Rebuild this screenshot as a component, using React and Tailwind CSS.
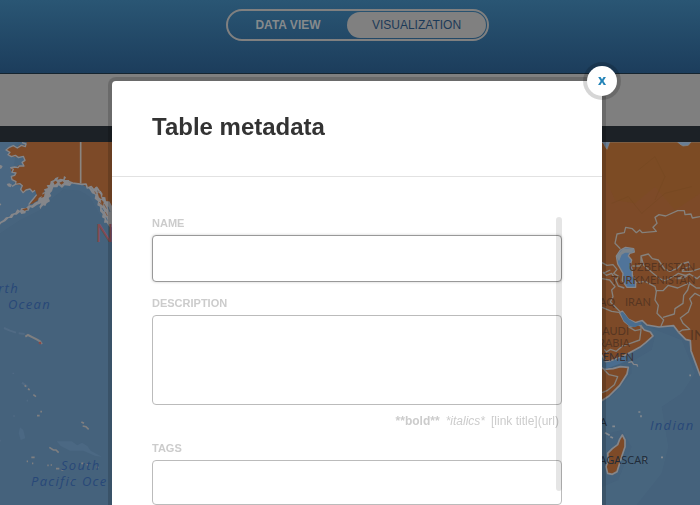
const LAND = '#7d4a28';
const COAST = '#85868a';
const SEA = 'fill-[#284878] text-[13px] italic tracking-widest';

function Alaska() {
  return (
    <g transform="translate(0 -82) scale(0.33333)" strokeLinejoin="round">
      <path d="M0 246H55L40 256L18 266L24 285L46 290L35 345L46 365L30 374L66 378L68 396L92 392L106 400L85 438L40 458L0 485Z" fill="#4d6a85" />
      <path d="M0 246L336 246L336 500L300 465L270 410L240 392L190 388L150 420L120 450L60 480L0 520Z" fill="#496680" opacity=".6" />
      <path
        d="M80 246L78 256L60 254L52 262L38 258L18 268L28 276L24 286L48 292L68 288L74 300L66 308L72 318L56 316L46 324L32 322L34 334L46 338L44 346L34 350L38 362L48 366L46 374L66 376L64 392L72 398L80 390L90 388L96 396L106 392L110 404L104 414L94 424L88 434L100 430L118 418L132 400L134 390L150 382L154 366L166 356L178 360L200 368L245 372L262 382L290 390L310 415L336 440V246Z"
        fill={LAND}
      />
      <path
        d="M66 248L78 252L76 260L64 256L52 264L40 257L28 262L18 270L30 277L24 284L34 290L46 286L56 293L70 289L75 301L66 307L72 318L58 318L54 323L44 321L32 323L40 328L36 337L48 339L44 346L34 349L36 359L48 365L46 373L36 379M46 373L60 371L67 377L62 388L69 398L78 390L90 387L98 396L105 391M110 404L102 414L92 426L86 434"
        fill="none" stroke={COAST} strokeWidth="4"
      />
      <path d="M20 372l8-2l8 4l-4 8l-8-3zM0 314l8 4l-3 7l-5 2zM0 430l4 3l-4 4z" fill={COAST} />
      <path
        d="M0 486L10 480L18 472L28 470L34 462L46 458L52 448L60 452L64 444L78 444L86 436L96 436L104 428L114 424L116 414L126 408L128 398L136 396L132 388L144 384L140 376L150 374L152 364L162 360L166 354L176 350L172 360L182 356L190 358L192 348L198 352L194 360L208 360L206 366L216 370L210 378L194 376L186 384L176 376L172 382L160 382L156 394L150 400L154 408L146 414L150 424L140 430L136 438L130 436L124 442L122 448L118 440L124 430L112 434L98 444L90 442L86 452L78 452L76 460L64 462L60 456L50 464L42 464L36 474L26 474L16 484L4 490L0 494Z"
        fill={COAST}
      />
      <path d="M160 366l8-4l4 6l-8 6zM178 368l10-4l4 4l-8 6zM66 448l14-4l4 4l-10 4zM126 404l8-4l-2 10l-8 4z" fill={LAND} />
      <path d="M242 246V370" stroke="#8a8580" strokeWidth="5" />
      <path d="M204 364L218 369L246 373L258 372L262 384L274 380L282 390L290 382L298 394" fill="none" stroke={COAST} strokeWidth="5" />
      <path
        d="M256 372L264 382L272 382L280 390L288 380L294 386L292 396L302 392L308 402L306 410L316 412L318 424L328 424L336 438L336 502L328 500L320 488L312 488L314 476L306 472L308 462L300 454L300 440L292 436L294 424L284 416L286 404L276 400L270 390Z"
        fill={COAST}
      />
      <path d="M294 398l6 4l4 14l-6-4zM304 420l6 6l-2 10l-4-6zM284 394l4 8M312 432l8 14M316 456l6 12M298 426l6 8" fill={LAND} stroke={LAND} strokeWidth="2" />
      <path d="M306 444l6 10M318 472l4 10M324 440l6 16" stroke="#4f6b86" strokeWidth="3" />
    </g>
  );
}

function Islands() {
  return (
    <g transform="translate(0 128) scale(0.33333)" fill="none" stroke="#7f7f80">
      <path d="M76 200L84 195L98 202L110 208L120 214L126 222" strokeWidth="6" />
      <circle cx="120" cy="219" r="4" fill="#8a4a48" stroke="none" />
      <path d="M12 174L30 182L48 188M56 190L74 192M66 338L82 350" stroke="#506a84" strokeWidth="6" />
      <path d="M74 346l4 4M84 356l5 4M100 374l8 6M111 437h8M121 425h5M244 456l8 4M248 468l10 2l8 8M148 532l12 8l8 0l8 8M94 562h10M96 580h4M80 574h4M142 586h4M152 585h4M168 596h10M184 600h6M194 528h4M211 524v4M244 580h6M260 584h4M290 592h6M212 634h4" strokeWidth="5" />
      <path d="M60 472L70 480L76 505L62 510L56 490ZM170 514L215 514L232 526L246 518L262 528L272 542L306 560L286 558L250 542L210 542L182 528Z" fill="#4b6883" stroke="none" />
      <path d="M80 392h4M40 308v4M42 436v4M0 512h2" stroke="#506a84" strokeWidth="5" />
    </g>
  );
}

function AsiaAndAfrica() {
  return (
    <g transform="translate(595 -82) scale(0.33333)" strokeLinejoin="round">
      <path d="M130 790L180 830L170 870L110 905L110 940L60 1000L0 1050V1130L80 1110L110 1160L70 1260L0 1290V1340H120L200 1240L220 1160L200 1040L260 1000L300 940L260 840Z" fill="#4a6781" opacity=".6" />
      <path
        d="M0 246H330V970L315 945L300 905L288 872L286 842L272 838L252 818L236 797L192 801L156 795L142 782L122 788L100 778L82 754L74 758L88 784L108 800L130 794L138 798L148 810L166 816L174 828L152 848L134 862L86 888L46 903L32 905L24 890L0 860Z"
        fill={LAND} stroke={COAST} strokeWidth="5"
      />
      <path d="M21 246H315V400L240 450L180 380L120 430L60 420L21 330Z" fill="#7c4c22" opacity=".6" />
      <path d="M0 910L28 928L54 926L76 920L100 922L96 942L74 976L42 1008L0 1035Z" fill={LAND} stroke={COAST} strokeWidth="5" />
      <path d="M100 908l10-3l6 8l10 1l2 6" fill="none" stroke={COAST} strokeWidth="4" />
      <path d="M82 1125L90 1140L90 1160L80 1190L66 1235L52 1243L38 1240L33 1220L40 1200L38 1180L52 1166L68 1154L74 1138Z" fill={LAND} stroke={COAST} strokeWidth="5" />
      <path
        d="M64 588L76 570L92 562L116 566L118 576L104 580L100 588L110 600L106 616L112 630L112 646L122 660L122 682L96 682L82 662L84 640L68 612Z"
        fill="#50749a" stroke={COAST} strokeWidth="4"
      />
      <path d="M64 588L84 566L116 566L112 578L90 578L80 584L72 604Z" fill="#7b848c" />
      <path d="M21 246H44L36 268L28 256M248 246H288L280 256L264 258L254 252Z" fill="#687e95" stroke={COAST} strokeWidth="2" />
      <g fill="none" stroke="#85817c" strokeWidth="4">
        <path d="M76 566L60 550L66 522L88 518L92 502L112 506L124 518L134 510L142 518L184 514L174 502L186 490L180 472L192 464L212 468L248 452L268 452L270 464L288 462L292 474L315 470" />
        <path d="M112 618H138V588L160 582L172 596L190 600L208 626L224 634L246 626L260 612L280 606L284 620L266 626L262 634L288 634L315 626M138 588L146 616L174 640L194 656L210 662L238 648L256 652L284 642L306 656L315 648" />
        <path d="M21 608L36 616L54 614L66 628L56 640L72 650L62 660L50 640L34 646L24 636M21 656L44 660L60 680L50 690L54 710L46 726L62 742L76 756M24 640L46 630M62 660L70 678L88 684" />
        <path d="M122 668L150 664L180 680L184 694L180 720L190 736L186 760L206 780L198 798M184 692L204 692L220 676L248 684L284 668L278 690L266 706L264 730L240 746L238 762L204 772M284 670L304 684L315 684M238 648L250 640L276 648L262 656L242 656M250 818L262 810L284 808L264 790L256 774L280 756L290 730L284 716L300 700L315 708" />
        <path d="M21 742L50 754L76 758M100 800L120 812L138 808L138 794M138 810L134 840L106 850L82 858L64 874L46 868L34 876L28 868M28 930L42 944L68 950L58 974L36 992L21 998" />
      </g>
      <path d="M138 794L118 802L104 799L86 782L76 758L84 756L102 778L122 790L140 784Z" fill="#4a6d8f" />
      <path d="M34 926L98 902L90 890L46 905L34 908Z" fill="#4a6d8f" />
      <path d="M130 1056h6M138 1066v6M52 1099h8M30 1118l14 8M46 1130l8 4M198 1192h6M283 946h5M148 1200l6-4" stroke="#84898f" strokeWidth="5" fill="none" />
      <path d="M130 330L180 290L210 350L180 420M50 430L100 410L140 460L210 400L290 380" fill="none" stroke="#70441f" strokeWidth="2" opacity=".5" />
    </g>
  );
}

function WorldMap() {
  return (
    <svg
      viewBox="0 0 700 363"
      preserveAspectRatio="xMidYMin slice"
      className="block w-full flex-1 bg-[#45627c] font-['Open_Sans','Noto_Sans',sans-serif]"
      role="img"
      aria-label="World map"
    >
      <Alaska />
      <Islands />
      <AsiaAndAfrica />
      <text x="95" y="100" className="fill-[#824a50] text-[25px]">N</text>
      <g className={SEA}>
        <text x="19" y="151" textAnchor="end">rth</text>
        <text x="51" y="167" textAnchor="end">Ocean</text>
        <text x="61" y="328">South</text>
        <text x="31" y="344">Pacific Oce</text>
        <text x="650" y="288">Indian</text>
      </g>
      <g className="fill-[#573622] font-['Lato',sans-serif] text-[11px]">
        <text x="629" y="129">UZBEKISTAN</text>
        <text x="611" y="142">TURKMENISTAN</text>
        <text x="625" y="164">IRAN</text>
        <text x="615" y="164" textAnchor="end">AQ</text>
        <text x="629" y="193" textAnchor="end">SAUDI</text>
        <text x="630" y="205" textAnchor="end">RABIA</text>
        <text x="634" y="219" textAnchor="end" className="fill-[#3a3236]">YEMEN</text>
        <text x="690" y="198" className="text-[14px]">IN</text>
      </g>
      <g className="fill-[#202a38] text-[11px]">
        <text x="607" y="284" textAnchor="end">A</text>
        <text x="648" y="322" textAnchor="end">AGASCAR</text>
      </g>
    </svg>
  );
}

function Header() {
  return (
    <header className="flex h-[74px] items-start justify-center border-b border-[#15242f] bg-linear-to-b from-[#2a5674] to-[#1c3d5c] pt-[9px] pl-[15px]">
      <nav className="flex h-8 items-center rounded-full border-2 border-[#808080] p-px text-[12px]">
        <button type="button" className="w-[118px] font-bold text-[#868a8c]">DATA VIEW</button>
        <button type="button" className="h-[26px] w-[139px] rounded-full bg-[#808080] text-[#1c3a58]">VISUALIZATION</button>
      </nav>
    </header>
  );
}

const FIELD = 'block w-full resize-none rounded-[4px] border bg-white px-3 text-[13px] text-[#333] outline-none';
const CAPTION = 'mb-1.5 block text-[11px] leading-3 font-bold text-[#ccc]';

function MetadataDialog() {
  return (
    <div className="fixed inset-0 flex items-start justify-center overflow-hidden pt-[81px] pl-[14px]">
      <section
        role="dialog"
        aria-labelledby="dialog-title"
        className="relative w-[490px] rounded-[4px] bg-white shadow-[0_0_0_4px_rgba(0,0,0,0.16)]"
      >
        <button
          type="button"
          aria-label="Close"
          className="absolute -top-[15px] -right-[15px] flex size-[30px] items-center justify-center rounded-full bg-white pb-0.5 font-['Open_Sans',sans-serif] text-[14px] leading-4 font-bold text-[#2484b8] shadow-[0_0_0_4px_rgba(0,0,0,0.16)]"
        >
          x
        </button>
        <header className="flex h-24 items-center border-b border-[#e2e2e2] px-10 pb-1">
          <h1 id="dialog-title" className="text-[24px] font-bold text-[#333]">Table metadata</h1>
        </header>
        <form className="relative mx-10 pt-10 pb-10">
          <label htmlFor="name" className={CAPTION}>NAME</label>
          <input id="name" className={`${FIELD} h-[47px] border-[#999] shadow-[0_0_3px_rgba(0,0,0,0.2)]`} />
          <label htmlFor="description" className={`${CAPTION} mt-[15px]`}>DESCRIPTION</label>
          <textarea id="description" className={`${FIELD} h-[90px] border-[#bbb]`} />
          <p className="mt-2 flex justify-end gap-1.5 pr-[3px] text-[12px] leading-4 text-[#ccc]">
            <strong>**bold**</strong>
            <em>*italics*</em>
            <span>[link title](url)</span>
          </p>
          <label htmlFor="tags" className={`${CAPTION} mt-[13px]`}>TAGS</label>
          <input id="tags" className={`${FIELD} h-[45px] border-[#bbb]`} />
          <div className="absolute top-10 right-0 h-[274px] w-1.5 rounded-full bg-black/10" />
        </form>
      </section>
    </div>
  );
}

export default function App() {
  return (
    <main className="flex h-screen flex-col overflow-hidden font-['Liberation_Sans',Arial,sans-serif]">
      <Header />
      <div className="h-[52px] bg-[#7f7f7f]" />
      <div className="h-4 bg-[#1c2126]" />
      <WorldMap />
      <MetadataDialog />
    </main>
  );
}
